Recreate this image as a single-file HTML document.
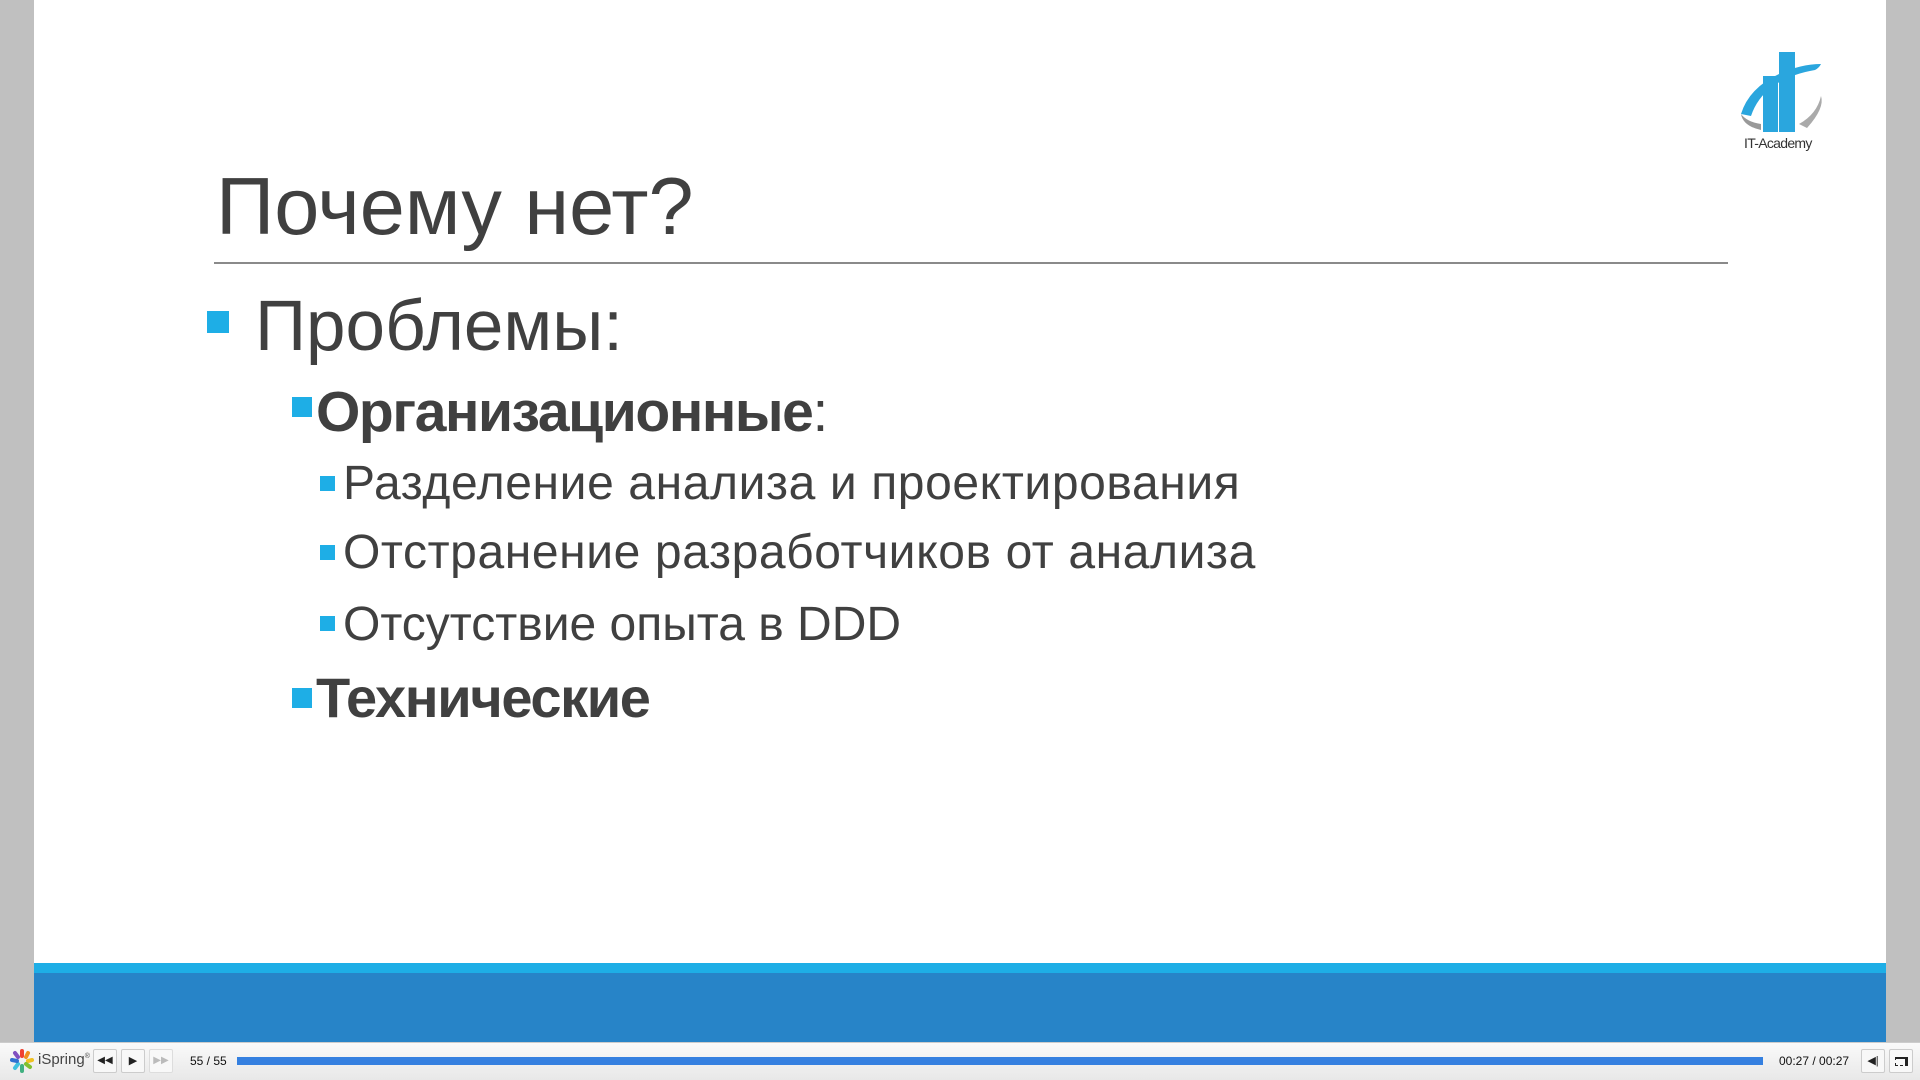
<!DOCTYPE html>
<html><head><meta charset="utf-8"><style>
*{margin:0;padding:0;box-sizing:border-box}
body{width:1920px;height:1080px;background:#c0c0c0;position:relative;overflow:hidden;font-family:"Liberation Sans",sans-serif;color:#404040}
.slide{position:absolute;left:34px;top:0;width:1852px;height:1042px;background:#fff}
.t{position:absolute;line-height:1;white-space:nowrap}
.b{position:absolute;background:#1eaee6}
</style></head><body>
<div class="slide"></div>
<div class="t" style="left:216px;top:167px;font-size:81px;color:#404040">Почему нет?</div>
<div style="position:absolute;left:214px;top:262px;width:1514px;height:2px;background:#8a8a8a"></div>
<div class="b" style="left:207px;top:311px;width:22px;height:22px"></div>
<div class="t" style="left:255px;top:291px;font-size:71px">Проблемы:</div>
<div class="b" style="left:292px;top:397px;width:20px;height:20px"></div>
<div class="t" style="left:316px;top:384px;font-size:57px;letter-spacing:-1.4px"><b>Организационные</b>:</div>
<div class="b" style="left:320px;top:476px;width:15px;height:15px"></div>
<div class="t" style="left:343px;top:460px;font-size:48px;letter-spacing:0.6px">Разделение анализа и проектирования</div>
<div class="b" style="left:320px;top:545px;width:15px;height:15px"></div>
<div class="t" style="left:343px;top:529px;font-size:48px;letter-spacing:0.6px">Отстранение разработчиков от анализа</div>
<div class="b" style="left:320px;top:616px;width:15px;height:15px"></div>
<div class="t" style="left:343px;top:601px;font-size:48px;letter-spacing:0px">Отсутствие опыта в DDD</div>
<div class="b" style="left:292px;top:688px;width:20px;height:20px"></div>
<div class="t" style="left:316px;top:670px;font-size:56px;letter-spacing:-1.4px;font-weight:bold">Технические</div>
<!-- logo -->
<svg style="position:absolute;left:1735px;top:48px" width="95" height="110" viewBox="0 0 95 110">
<path d="M6 66 Q14 40 44 26 Q66 16 86 16 Q84 20 80 22 Q56 26 38 38 Q22 50 16 68 Z" fill="#2aa6de"/>
<rect x="28" y="28" width="15" height="56" fill="#2aa6de"/>
<rect x="44" y="4" width="16" height="80" fill="#2aa6de"/>
<path d="M64 76 Q82 66 86 48 Q90 60 72 80 Z" fill="#aaa"/>
<path d="M6 66 Q8 78 26 82 L26 76 Q12 74 6 66Z" fill="#999"/>
<text x="9" y="100" font-family="Liberation Sans" font-size="14" fill="#333" letter-spacing="-0.7">IT-Academy</text>
</svg>
<!-- bottom bars -->
<div style="position:absolute;left:34px;top:963px;width:1852px;height:10px;background:#1eaee6"></div>
<div style="position:absolute;left:34px;top:973px;width:1852px;height:69px;background:#2784c8"></div>
<div style="position:absolute;left:0;top:1042px;width:1920px;height:38px;background:linear-gradient(#fafafa,#e8e8e8);border-top:1px solid #ccc"></div>
<svg style="position:absolute;left:8px;top:1047px" width="28" height="28" viewBox="0 0 28 28">
<g stroke-width="4" stroke-linecap="round">
<line x1="14" y1="4" x2="14" y2="9" stroke="#f04030"/><line x1="20" y1="6" x2="18" y2="10" stroke="#f09020"/>
<line x1="24" y1="13" x2="20" y2="14" stroke="#f0c020"/><line x1="22" y1="20" x2="18" y2="17" stroke="#80c030"/>
<line x1="14" y1="24" x2="14" y2="19" stroke="#40b080"/><line x1="7" y1="21" x2="10" y2="17" stroke="#40c0e0"/>
<line x1="4" y1="13" x2="9" y2="14" stroke="#3070d0"/><line x1="7" y1="6" x2="10" y2="10" stroke="#8050c0"/>
</g></svg>
<div class="t" style="left:38px;top:1052px;font-size:15px;color:#444">iSpring<sup style="font-size:7px">®</sup></div>
<div style="position:absolute;left:93px;top:1049px;width:24px;height:24px;border:1px solid #ccc;border-radius:2px;background:#f8f8f8;font-size:10px;text-align:center;line-height:22px;color:#222">◀◀</div>
<div style="position:absolute;left:121px;top:1049px;width:24px;height:24px;border:1px solid #ccc;border-radius:2px;background:#f8f8f8;font-size:11px;text-align:center;line-height:22px;color:#222">▶</div>
<div style="position:absolute;left:149px;top:1049px;width:24px;height:24px;border:1px solid #ddd;border-radius:2px;background:#f8f8f8;font-size:10px;text-align:center;line-height:22px;color:#bbb">▶▶</div>
<div class="t" style="left:190px;top:1055px;font-size:12px;color:#111">55 / 55</div>
<div style="position:absolute;left:237px;top:1057px;width:1526px;height:8px;background:#3580e0"></div>
<div class="t" style="left:1779px;top:1055px;font-size:12px;color:#111">00:27 / 00:27</div>
<div style="position:absolute;left:1861px;top:1049px;width:24px;height:24px;border:1px solid #ccc;border-radius:2px;background:#f8f8f8;font-size:11px;text-align:center;line-height:22px;color:#222">◀|</div>
<div style="position:absolute;left:1889px;top:1049px;width:24px;height:24px;border:1px solid #ccc;border-radius:2px;background:#f8f8f8"><div style="position:absolute;left:5px;top:7px;width:13px;height:9px;border:1px dashed #222;border-right:3px solid #222;border-top:2px solid #222"></div></div>
</body></html>
